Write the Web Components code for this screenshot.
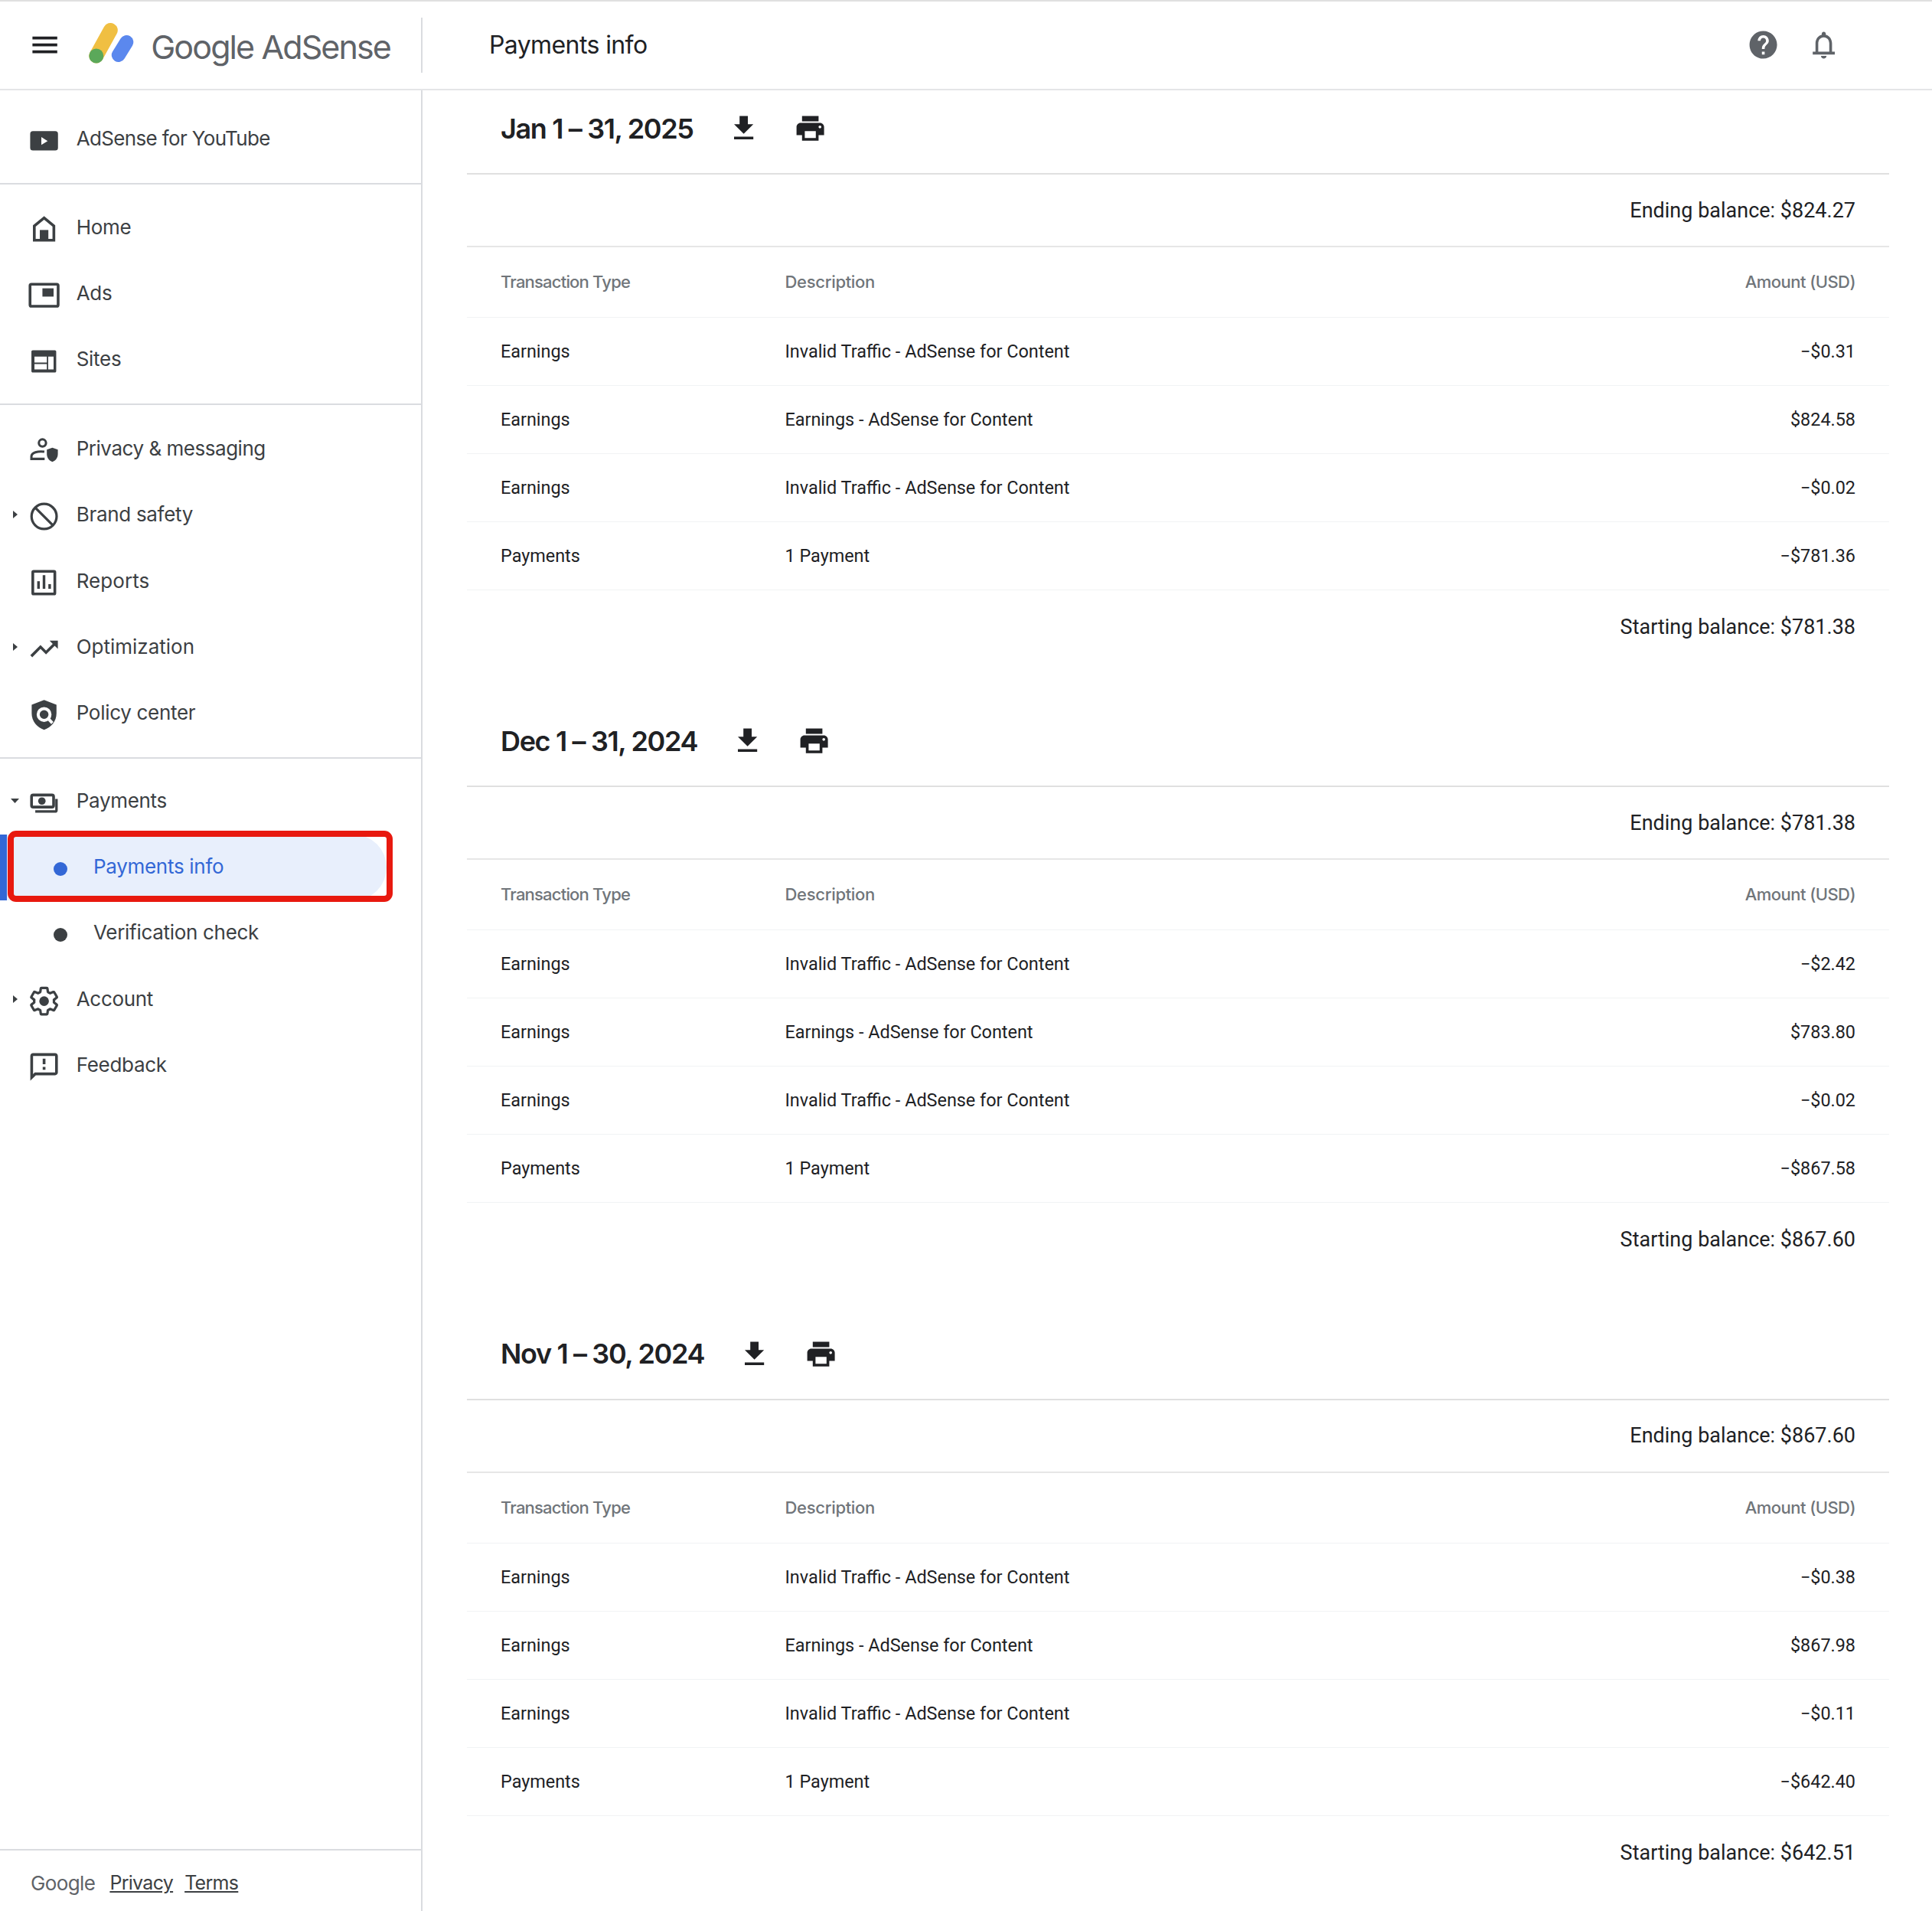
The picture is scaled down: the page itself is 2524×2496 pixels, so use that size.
<!DOCTYPE html>
<html>
<head>
<meta charset="utf-8">
<title>Payments info</title>
<style>
  html, body { margin: 0; height: 2496px; overflow: hidden; background: #fff; }
  body { font-family: Roboto, sans-serif; --gs: Inter, "Noto Sans", sans-serif; }
</style>
</head>
<body>
<adsense-app>
  <top-bar slot="top" page="Payments info"></top-bar>
  <side-nav slot="side">
    <nav-group style="--pad:21px 0 14px">
      <nav-item icon="youtube" style="letter-spacing:-.65px">AdSense for YouTube</nav-item>
    </nav-group>
    <nav-group style="--pad:13px 0 13px">
      <nav-item icon="home">Home</nav-item>
      <nav-item icon="ads">Ads</nav-item>
      <nav-item icon="sites">Sites</nav-item>
    </nav-group>
    <nav-group style="--pad:15px 0 13px">
      <nav-item icon="privacy" style="letter-spacing:-.47px">Privacy &amp; messaging</nav-item>
      <nav-item icon="block" arrow="right">Brand safety</nav-item>
      <nav-item icon="reports" style="letter-spacing:.05px">Reports</nav-item>
      <nav-item icon="trend" arrow="right" style="letter-spacing:0">Optimization</nav-item>
      <nav-item icon="policy">Policy center</nav-item>
    </nav-group>
    <nav-group last style="--pad:13px 0 0">
      <nav-item icon="payments" arrow="down">Payments</nav-item>
      <nav-item sub selected>Payments info</nav-item>
      <nav-item sub>Verification check</nav-item>
      <nav-item icon="gear" arrow="right">Account</nav-item>
      <nav-item icon="feedback">Feedback</nav-item>
    </nav-group>
  </side-nav>

  <payment-section slot="main" period="Jan 1 – 31, 2025" ending="$824.27" starting="$781.38">
    <tx-row><span slot="type">Earnings</span><span slot="desc">Invalid Traffic - AdSense for Content</span><span slot="amount">−$0.31</span></tx-row>
    <tx-row><span slot="type">Earnings</span><span slot="desc">Earnings - AdSense for Content</span><span slot="amount">$824.58</span></tx-row>
    <tx-row><span slot="type">Earnings</span><span slot="desc">Invalid Traffic - AdSense for Content</span><span slot="amount">−$0.02</span></tx-row>
    <tx-row><span slot="type">Payments</span><span slot="desc">1 Payment</span><span slot="amount">−$781.36</span></tx-row>
  </payment-section>
  <payment-section slot="main" period="Dec 1 – 31, 2024" ending="$781.38" starting="$867.60">
    <tx-row><span slot="type">Earnings</span><span slot="desc">Invalid Traffic - AdSense for Content</span><span slot="amount">−$2.42</span></tx-row>
    <tx-row><span slot="type">Earnings</span><span slot="desc">Earnings - AdSense for Content</span><span slot="amount">$783.80</span></tx-row>
    <tx-row><span slot="type">Earnings</span><span slot="desc">Invalid Traffic - AdSense for Content</span><span slot="amount">−$0.02</span></tx-row>
    <tx-row><span slot="type">Payments</span><span slot="desc">1 Payment</span><span slot="amount">−$867.58</span></tx-row>
  </payment-section>
  <payment-section slot="main" period="Nov 1 – 30, 2024" ending="$867.60" starting="$642.51">
    <tx-row><span slot="type">Earnings</span><span slot="desc">Invalid Traffic - AdSense for Content</span><span slot="amount">−$0.38</span></tx-row>
    <tx-row><span slot="type">Earnings</span><span slot="desc">Earnings - AdSense for Content</span><span slot="amount">$867.98</span></tx-row>
    <tx-row><span slot="type">Earnings</span><span slot="desc">Invalid Traffic - AdSense for Content</span><span slot="amount">−$0.11</span></tx-row>
    <tx-row><span slot="type">Payments</span><span slot="desc">1 Payment</span><span slot="amount">−$642.40</span></tx-row>
  </payment-section>
</adsense-app>

<script>
const ICONS = {
  menu: `<path d="M3 18h18v-2H3v2zm0-5h18v-2H3v2zm0-7v2h18V6H3z"/>`,
  youtube: `<rect x="1.9" y="5.2" width="20.2" height="14" rx="2"/><path d="M10 9.4l4.6 2.9-4.6 2.9z" fill="#fff"/>`,
  home: `<path d="M12 4.2L4.9 10v10.4h14.2V10z" fill="none" stroke="currentColor" stroke-width="2"/><rect x="8.9" y="13" width="6.2" height="7"/>`,
  ads: `<rect x="1.8" y="4" width="20.4" height="16" rx="1" fill="none" stroke="currentColor" stroke-width="2"/><rect x="10.8" y="7" width="8.1" height="6"/>`,
  sites: `<path fill-rule="evenodd" d="M3.8 4.2h16c.6 0 1 .4 1 1v14.1c0 .6-.4 1-1 1h-16c-.6 0-1-.4-1-1V5.200c0-.6.4-1 1-1zM5 8.700v4.400h9V8.700zm0 5.500v3.900h9v-3.900zm10-5.500v9.400h3.900V8.700z"/>`,
  privacy: `<circle cx="10.800" cy="6.400" r="2.600" fill="none" stroke="currentColor" stroke-width="1.700"/><path d="M12.400 18H2.800v-1.800c0-2.700 4.600-4.100 9.400-3.400" fill="none" stroke="currentColor" stroke-width="1.700"/><path d="M18 9.800l-4 1.500v3.200c0 2.700 1.700 4.900 4 5.700 2.300-.8 4-3 4-5.700v-3.200z"/>`,
  block: `<circle cx="12" cy="12" r="9.100" fill="none" stroke="currentColor" stroke-width="1.800"/><path d="M5.600 5.600l12.800 12.800" fill="none" stroke="currentColor" stroke-width="1.800"/>`,
  reports: `<rect x="3.800" y="4" width="16" height="16.400" rx=".6" fill="none" stroke="currentColor" stroke-width="2"/><rect x="7" y="11.200" width="1.900" height="5.500"/><rect x="11" y="6.800" width="1.900" height="9.900"/><rect x="15.100" y="13.300" width="1.900" height="3.400"/>`,
  trend: `<path d="M16 6l2.290 2.290-4.880 4.880-4-4L2 16.590 3.410 18l6-6 4 4 6.300-6.290L22 12V6z"/>`,
  policy: `<path d="M12 1.300L3 4.700V11c0 5.600 3.900 10.300 9 11.900 5.100-1.600 9-6.300 9-11.900V4.700z"/><circle cx="12" cy="11.800" r="4.300" fill="none" stroke="#fff" stroke-width="2.200"/><path d="M15 14.800l3 3.200" fill="none" stroke="#fff" stroke-width="2.200"/>`,
  payments: `<rect x="2.900" y="6.300" width="16" height="8.800" rx="1.200" fill="none" stroke="currentColor" stroke-width="2"/><circle cx="10.400" cy="10.700" r="2.700"/><path d="M21 9.200v8.100c0 .6-.4 1-1 1H5.600" fill="none" stroke="currentColor" stroke-width="1.800"/>`,
  gear: `<path fill="none" stroke="currentColor" stroke-width="1.800" stroke-linejoin="round" d="M19.140 12.940c.04-.3.06-.61.06-.94 0-.32-.02-.64-.07-.94l2.030-1.580c.18-.14.23-.41.12-.61l-1.920-3.320c-.12-.22-.37-.29-.59-.22l-2.390.96c-.5-.38-1.030-.7-1.620-.94l-.36-2.540c-.04-.24-.24-.41-.48-.41h-3.840c-.24 0-.43.17-.47.41l-.36 2.540c-.59.24-1.130.57-1.620.94l-2.390-.96c-.22-.08-.47 0-.59.22L2.740 8.870c-.12.21-.08.47.12.61l2.030 1.580c-.05.3-.09.63-.09.94s.02.64.07.94l-2.030 1.580c-.18.14-.23.41-.12.61l1.920 3.320c.12.22.37.29.59.22l2.390-.96c.5.38 1.030.7 1.620.94l.36 2.540c.05.24.24.41.48.41h3.840c.24 0 .44-.17.47-.41l.36-2.540c.59-.24 1.130-.56 1.620-.94l2.390.96c.22.08.47 0 .59-.22l1.920-3.320c.12-.22.07-.47-.12-.61z"/><circle cx="12" cy="12" r="3.500"/>`,
  feedback: `<path d="M20 2H4c-1.100 0-1.990.9-1.990 2L2 22l4-4h14c1.100 0 2-.9 2-2V4c0-1.100-.9-2-2-2zm0 14H5.170L4 17.170V4h16v12zm-9-4h2v2h-2zm0-6h2v4h-2z"/>`,
  download: `<path d="M19 9h-4V3H9v6H5l7 7 7-7zM5 18v2h14v-2H5z"/>`,
  print: `<path d="M19 8H5c-1.660 0-3 1.340-3 3v6h4v4h12v-4h4v-6c0-1.660-1.340-3-3-3zm-3 11H8v-5h8v5zm3-7c-.55 0-1-.45-1-1s.45-1 1-1 1 .45 1 1-.45 1-1 1zm-1-9H6v4h12V3z"/>`,
  help: `<path d="M12 2C6.480 2 2 6.480 2 12s4.480 10 10 10 10-4.480 10-10S17.520 2 12 2zm1 17h-2v-2h2v2zm2.070-7.750l-.9.920C13.450 12.900 13 13.500 13 15h-2v-.5c0-1.100.45-2.100 1.170-2.830l1.240-1.260c.37-.36.59-.86.59-1.410 0-1.100-.9-2-2-2s-2 .9-2 2H8c0-2.210 1.790-4 4-4s4 1.790 4 4c0 .88-.36 1.680-.93 2.250z"/>`,
  bell: `<path d="M12 22c1.100 0 2-.9 2-2h-4c0 1.100.9 2 2 2zM18 17v-6c0-3.070-1.640-5.640-4.500-6.320V4c0-.83-.67-1.500-1.500-1.500s-1.500.67-1.500 1.500v.68C7.630 5.360 6 7.920 6 11v6H4v2h16v-2h-2zm-2 0H8v-6c0-2.480 1.510-4.500 4-4.500s4 2.020 4 4.500v6z"/>`,
};

class AppIcon extends HTMLElement {
  connectedCallback() {
    const name = this.getAttribute("name");
    this.attachShadow({ mode: "open" }).innerHTML = `
      <style>
        :host { display: block; width: 43.2px; height: 43.2px; flex: none; }
        svg { display: block; width: 100%; height: 100%; fill: currentColor; }
      </style>
      <svg viewBox="0 0 24 24">${ICONS[name] || ""}</svg>`;
  }
}

class AdsenseApp extends HTMLElement {
  constructor() {
    super();
    this.attachShadow({ mode: "open" }).innerHTML = `
      <style>
        :host { display: flex; flex-direction: column; height: 2496px; }
        .body { flex: 1; display: flex; min-height: 0; }
        .side { width: 552px; flex: none; box-sizing: border-box; border-right: 2px solid #dadce0; display: flex; }
        .main { flex: 1; min-width: 0; padding: 0 56px 0 58px; overflow: hidden; }
      </style>
      <slot name="top"></slot>
      <div class="body">
        <div class="side"><slot name="side"></slot></div>
        <div class="main"><slot name="main"></slot></div>
      </div>`;
  }
}

class TopBar extends HTMLElement {
  connectedCallback() {
    this.attachShadow({ mode: "open" }).innerHTML = `
      <style>
        :host { display: flex; align-items: center; height: 118px; box-sizing: border-box; border-top: 2px solid #e0e0e0; border-bottom: 2px solid #e4e5e7; flex: none; }
        .brand { width: 552px; box-sizing: border-box; height: 72px; display: flex; align-items: center; padding-left: 37px; border-right: 2px solid #dadce0; flex: none; }
        .menu { color: #202124; }
        .logo { width: 62px; height: 56px; margin: -6px 0 0 36px; flex: none; display: block; }
        .word { font: 400 43px/1 var(--gs); color: #5f6368; margin: 4px 0 0 19px; letter-spacing: -1.9px; white-space: nowrap; }
        h1 { font: 400 32px/1 var(--gs); color: #202124; margin: 0 0 0 87px; letter-spacing: -.6px; }
        .tools { margin-left: auto; display: flex; gap: 36px; color: #5f6368; padding-right: 120px; }
      </style>
      <div class="brand">
        <app-icon class="menu" name="menu"></app-icon>
        <svg class="logo" viewBox="0 0 62 56">
          <line x1="38.800" y1="44" x2="49.300" y2="27" stroke="#5b88ee" stroke-width="18" stroke-linecap="round"/>
          <line x1="9.800" y1="45" x2="28.300" y2="11.500" stroke="#f0bf42" stroke-width="19" stroke-linecap="round"/>
          <circle cx="9.800" cy="45" r="9.500" fill="#5ba85a"/>
        </svg>
        <span class="word">Google AdSense</span>
      </div>
      <h1>${this.getAttribute("page")}</h1>
      <div class="tools"><app-icon name="help"></app-icon><app-icon name="bell"></app-icon></div>`;
  }
}

class SideNav extends HTMLElement {
  constructor() {
    super();
    this.attachShadow({ mode: "open" }).innerHTML = `
      <style>
        :host { display: flex; flex-direction: column; flex: 1; min-width: 0; color: #3c4043; font-family: var(--gs); }
        .foot { margin-top: auto; height: 81px; box-sizing: border-box; border-top: 2px solid #dadce0; display: flex; align-items: center; padding: 5px 0 0 40px; font-size: 25px; }
        .g { font-size: 26px; color: #5f6368; margin-right: 19px; letter-spacing: -.6px; }
        a { color: #3c4043; text-decoration: underline; margin-right: 15px; letter-spacing: -.7px; }
      </style>
      <slot></slot>
      <div class="foot"><span class="g">Google</span><a>Privacy</a><a>Terms</a></div>`;
  }
}

class NavGroup extends HTMLElement {
  constructor() {
    super();
    this.attachShadow({ mode: "open" }).innerHTML = `
      <style>
        :host { display: block; padding: var(--pad); border-bottom: 2px solid #dadce0; }
        :host([last]) { border-bottom: 0; }
      </style>
      <slot></slot>`;
  }
}

class NavItem extends HTMLElement {
  connectedCallback() {
    const icon = this.getAttribute("icon");
    const arrow = this.getAttribute("arrow");
    const tri = arrow === "right" ? `<path d="M3 1l6 5-6 5z"/>` : arrow === "down" ? `<path d="M0 3h11l-5.500 6z"/>` : "";
    const lead = this.hasAttribute("sub")
      ? `<span class="dot"></span>`
      : `<span class="caret"><svg viewBox="0 0 12 12">${tri}</svg></span><app-icon name="${icon}"></app-icon>`;
    this.attachShadow({ mode: "open" }).innerHTML = `
      <style>
        :host { display: flex; align-items: center; height: 86.4px; position: relative; isolation: isolate; font-size: 26px; letter-spacing: -.3px; white-space: nowrap; color: #3c4043; }
        .caret { width: 36px; flex: none; display: flex; justify-content: flex-end; }
        .caret svg { width: 12px; height: 12px; fill: currentColor; margin-right: 10px; margin-top: -2px; }
        app-icon { margin-top: 3px; margin-right: 20.5px; }
        .dot { width: 18px; height: 18px; border-radius: 50%; background: currentColor; margin: 4px 34px 0 70px; flex: none; }
        .label { margin-top: -3px; }
        :host([selected]) { color: #3367d6; }
        :host([selected]) .bg { position: absolute; left: 0; top: 0; bottom: 0; width: 505px; box-sizing: border-box; border-left: 9px solid #3367d6; background: #e8effc; background-clip: padding-box; border-radius: 0 43px 43px 0; z-index: -1; }
        :host([selected]) .mark { position: absolute; left: 10px; top: -5px; width: 503px; height: 93px; box-sizing: border-box; border: 8px solid #e8190f; border-radius: 11px; }
      </style>
      ${this.hasAttribute("selected") ? `<span class="bg"></span><span class="mark"></span>` : ""}
      ${lead}<span class="label"><slot></slot></span>`;
  }
}

class TxRow extends HTMLElement {
  constructor() {
    super();
    this.attachShadow({ mode: "open" }).innerHTML = `
      <style>
        :host { display: flex; align-items: center; height: 89px; box-sizing: border-box; border-bottom: 1px solid #f1f3f4; padding: 0 44px; font-size: 23.4px; color: #202124; }
        .t { width: 371.5px; flex: none; }
        .d { flex: 1; }
      </style>
      <div class="t"><slot name="type"></slot></div>
      <div class="d"><slot name="desc"></slot></div>
      <div><slot name="amount"></slot></div>`;
  }
}

class PaymentSection extends HTMLElement {
  connectedCallback() {
    const a = (n) => this.getAttribute(n);
    this.attachShadow({ mode: "open" }).innerHTML = `
      <style>
        :host { display: block; padding-bottom: 51.4px; color: #202124; }
        .head { height: 110px; box-sizing: border-box; padding: 0 0 9px 44px; display: flex; align-items: center; border-bottom: 2px solid #e0e0e0; }
        h2 { font: 600 36px/1 var(--gs); margin: 0 44px 0 0; letter-spacing: -1.35px; white-space: nowrap; }
        .head app-icon + app-icon { margin-left: 44px; }
        .bal { display: flex; justify-content: flex-end; align-items: center; padding-right: 44px; font-size: 27px; }
        .end { height: 95px; box-sizing: border-box; border-bottom: 2px solid #e6e6e6; }
        .start { height: 96px; }
        .cols { display: flex; align-items: center; height: 92px; box-sizing: border-box; border-bottom: 1px solid #f1f3f4; padding: 0 44px 1px; font: 500 22px var(--gs); letter-spacing: -.3px; color: #70757a; }
        .cols .t { width: 371.5px; flex: none; letter-spacing: -.8px; }
        .cols .d { flex: 1; }
        .cols .r { letter-spacing: -.55px; }
      </style>
      <div class="head">
        <h2>${a("period")}</h2>
        <app-icon name="download"></app-icon>
        <app-icon name="print"></app-icon>
      </div>
      <div class="bal end">Ending balance: ${a("ending")}</div>
      <div class="cols"><div class="t">Transaction Type</div><div class="d">Description</div><div class="r">Amount (USD)</div></div>
      <slot></slot>
      <div class="bal start">Starting balance: ${a("starting")}</div>`;
  }
}

customElements.define("app-icon", AppIcon);
customElements.define("nav-group", NavGroup);
customElements.define("nav-item", NavItem);
customElements.define("side-nav", SideNav);
customElements.define("top-bar", TopBar);
customElements.define("tx-row", TxRow);
customElements.define("payment-section", PaymentSection);
customElements.define("adsense-app", AdsenseApp);
</script>
</body>
</html>
